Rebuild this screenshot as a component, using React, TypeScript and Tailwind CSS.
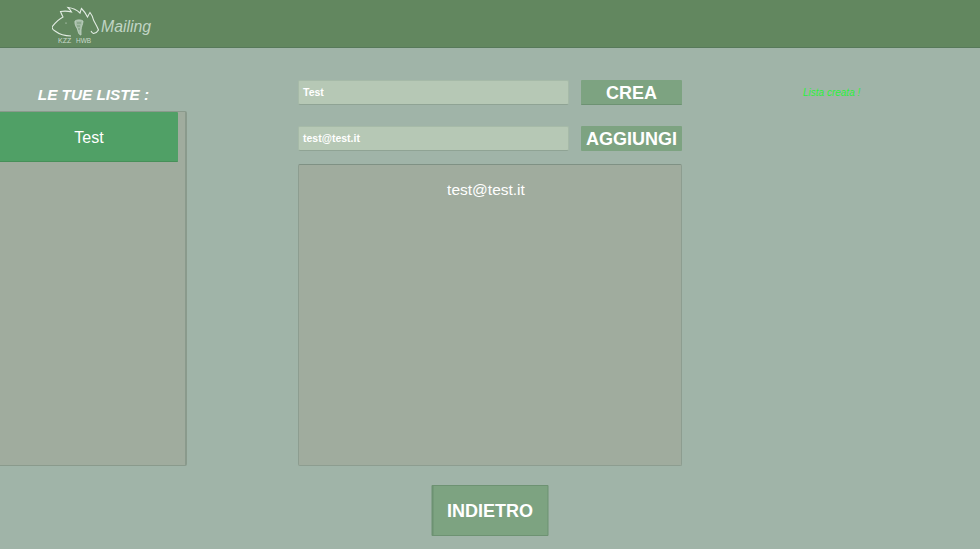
import React from 'react';

const Logo = () => (
  <svg width="50" height="38" viewBox="0 0 50 38" fill="none" className="shrink-0">
    <path
      d="M0 21 C3 17 7 13 11 11 C10 9 9 7 8.5 5.5 C12 5 16 5 19.5 6 C18.5 4 17.500 3 16 1.5 C21 2 25 4 28 7 C28.5 5 29 4 29.5 2.5 C32 5 34 8 35.5 11 C36.5 9 37 8 38 6.5 C40 9 41 11 41.5 14 C43 17 45 20 46.5 24 C45.5 26 44 27 41.5 27.5 C40 27 39.5 26 39 25"
      stroke="#e2ece3"
      strokeWidth="1.1"
    />
    <path d="M0 21 C0 23 1 24 3 25 C7 28 13 30 19 30" stroke="#e2ece3" strokeWidth="1.1" />
    <path d="M23 15 C25 13.500 29 13.500 31 15 C31 18 29 21 29 24 L29 29 C27 29 26 26 25.500 23 C24 21 22.500 18 23 15 Z" fill="#a4bca6" stroke="#c8d8ca" strokeWidth="0.8" />
    <path d="M25 17 L29 17 M25 20 L28 20 M26 23 L28 23" stroke="#6d8f6c" strokeWidth="0.8" />
    <circle cx="14" cy="17" r="0.6" fill="#e2ece3" />
    <text x="6" y="36.500" fontSize="7" fill="#c9dacc" fontFamily="'Liberation Sans', sans-serif">KZZ</text>
    <text x="24" y="36.500" fontSize="6.500" fill="#c9dacc" fontFamily="'Liberation Sans', sans-serif">HWB</text>
  </svg>
);

export default function App() {
  return (
    <div className="w-[980px] h-[549px] overflow-hidden bg-[#a0b4a8] text-white font-['Liberation_Sans',Arial,sans-serif]">
      <header className="h-[48px] bg-[#62875f] border-b border-[#57795a] pl-[52px] pt-[6px] flex items-start">
        <Logo />
        <span className="ml-[-1px] mt-[12px] text-[15.800px] leading-[18px] italic text-[#c0d4c4]">Mailing</span>
      </header>

      <main className="flex items-start">
        <section className="w-[187px] shrink-0 pt-[38px]">
          <h2 className="h-[25px] text-center text-[15.300px] leading-[18px] font-bold italic">LE TUE LISTE :</h2>
          <div className="h-[355px] bg-[#a0ac9e] border-r-2 border-b border-t border-[#8a9a8c] rounded-r-[2px]">
            <div className="w-[178px] h-[50px] bg-[#50a066] border-b border-[#479059] rounded-r-[1px] flex items-center justify-center text-[16px] leading-[20px] pt-[2px]">
              Test
            </div>
          </div>
        </section>

        <section className="w-[384px] shrink-0 ml-[111px] pt-[32px]">
          <div className="flex justify-between">
            <div className="w-[271px] h-[25px] bg-[#b6c8b5] border border-[#a6baa8] border-b-[#8fa394] rounded-[2px] pl-[4px] flex items-center text-[10.500px] font-bold">Test</div>
            <button className="w-[101px] h-[25px] bg-[#7da381] border-b border-[#6d9272] rounded-[1px] text-[18px] font-bold">CREA</button>
          </div>
          <div className="flex justify-between mt-[21px]">
            <div className="w-[271px] h-[25px] bg-[#b6c8b5] border border-[#a6baa8] border-b-[#8fa394] rounded-[2px] pl-[4px] flex items-center text-[10.500px] font-bold">test@test.it</div>
            <button className="w-[101px] h-[25px] bg-[#7da381] rounded-[1px] text-[18px] font-bold">AGGIUNGI</button>
          </div>
          <div className="h-[302px] mt-[13px] bg-[#a0ac9e] border border-[#8d9d90] border-t-[#7f9184] rounded-[2px] pt-[15px] text-center text-[15.500px] leading-[20px]">
            <span className="inline-block translate-x-[-4px]">test@test.it</span>
          </div>
          <div className="flex justify-center mt-[19px]">
            <button className="w-[117px] h-[51px] translate-x-[-0.500px] bg-[#7da381] border border-l-2 border-[#6d9272] rounded-[1px] text-[18px] font-bold pt-[1px]">INDIETRO</button>
          </div>
        </section>

        <aside className="ml-[121px] pt-[40px] text-[10px] leading-[10px] italic text-[#2cf03c]">Lista creata !</aside>
      </main>
    </div>
  );
}
